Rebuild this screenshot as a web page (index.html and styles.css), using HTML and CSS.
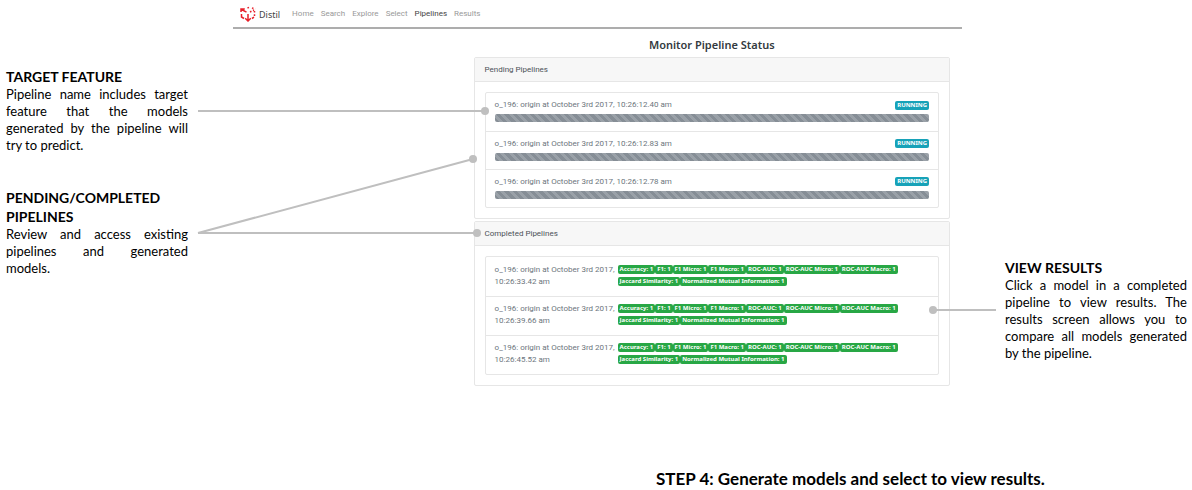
FILE: index.html
```html
<!DOCTYPE html>
<html lang="en">
<head>
<meta charset="utf-8">
<title>Distil - Monitor Pipeline Status</title>
<link rel="stylesheet" href="styles.css">
</head>
<body>
<div class="sheet">
  <aside class="notes notes-left">
    <section class="note note-target">
      <h2>TARGET FEATURE</h2>
      <p>Pipeline name includes target feature that the models generated by the pipeline will try to predict.</p>
    </section>
    <section class="note">
      <h2>PENDING/COMPLETED PIPELINES</h2>
      <p>Review and access existing pipelines and generated models.</p>
    </section>
  </aside>

  <div class="app">
    <header class="navbar">
      <a class="brand" href="#">
        <svg class="logo" viewBox="0 0 16 16" aria-hidden="true">
          <g fill="none" stroke="#e8202a" stroke-width="1.5">
            <path d="M1 6V3H4.800M1.500 3.500L6.500 6.200"/>
            <path d="M8 8V14.500M5.200 12.300L8 15L10.800 12.300"/>
            <path d="M1.500 8V11L4 12.500M14 11.200L12 12.500"/>
            <path stroke-dasharray="1.600 1.700" d="M7.500 2L10.500 .8M10 6L14 4M12 1.800L15 3.300M14.500 5V11"/>
          </g>
        </svg>
        <span>Distil</span>
      </a>
      <nav class="links">
        <a href="#">Home</a>
        <a href="#">Search</a>
        <a href="#">Explore</a>
        <a href="#">Select</a>
        <a class="active" href="#" aria-current="page">Pipelines</a>
        <a href="#">Results</a>
      </nav>
    </header>

    <main class="content">
      <h1>Monitor Pipeline Status</h1>
      <section class="card">
        <h3>Pending Pipelines</h3>
        <ul class="list pending">
          <li><div class="row"><span>o_196: origin at October 3rd 2017, 10:26:12.40 am</span><span class="badge info">RUNNING</span></div><div class="bar"></div></li>
          <li><div class="row"><span>o_196: origin at October 3rd 2017, 10:26:12.83 am</span><span class="badge info">RUNNING</span></div><div class="bar"></div></li>
          <li><div class="row"><span>o_196: origin at October 3rd 2017, 10:26:12.78 am</span><span class="badge info">RUNNING</span></div><div class="bar"></div></li>
        </ul>
      </section>
      <section class="card">
        <h3>Completed Pipelines</h3>
        <ul class="list completed">
          <li>
            <span class="name">o_196: origin at October 3rd 2017, 10:26:33.42 am</span>
            <div class="scores"><span class="badge">Accuracy: 1</span><span class="badge">F1: 1</span><span class="badge">F1 Micro: 1</span><span class="badge">F1 Macro: 1</span><span class="badge">ROC-AUC: 1</span><span class="badge">ROC-AUC Micro: 1</span><span class="badge">ROC-AUC Macro: 1</span><span class="badge">Jaccard Similarity: 1</span><span class="badge">Normalized Mutual Information: 1</span></div>
          </li>
          <li>
            <span class="name">o_196: origin at October 3rd 2017, 10:26:39.66 am</span>
            <div class="scores"><span class="badge">Accuracy: 1</span><span class="badge">F1: 1</span><span class="badge">F1 Micro: 1</span><span class="badge">F1 Macro: 1</span><span class="badge">ROC-AUC: 1</span><span class="badge">ROC-AUC Micro: 1</span><span class="badge">ROC-AUC Macro: 1</span><span class="badge">Jaccard Similarity: 1</span><span class="badge">Normalized Mutual Information: 1</span></div>
          </li>
          <li>
            <span class="name">o_196: origin at October 3rd 2017, 10:26:45.52 am</span>
            <div class="scores"><span class="badge">Accuracy: 1</span><span class="badge">F1: 1</span><span class="badge">F1 Micro: 1</span><span class="badge">F1 Macro: 1</span><span class="badge">ROC-AUC: 1</span><span class="badge">ROC-AUC Micro: 1</span><span class="badge">ROC-AUC Macro: 1</span><span class="badge">Jaccard Similarity: 1</span><span class="badge">Normalized Mutual Information: 1</span></div>
          </li>
        </ul>
      </section>
    </main>
  </div>

  <aside class="notes notes-right">
    <section class="note">
      <h2>VIEW RESULTS</h2>
      <p>Click a model in a completed pipeline to view results. The results screen allows you to compare all models generated by the pipeline.</p>
    </section>
  </aside>

  <svg class="connectors" viewBox="0 0 1192 490" aria-hidden="true">
    <g stroke="#bfbfbf" stroke-width="2">
      <path d="M198 111H485M198 233L473 159M198 233H477M933 310H996"/>
    </g>
    <g fill="#bfbfbf">
      <circle cx="485" cy="111" r="4"/>
      <circle cx="473" cy="159" r="4"/>
      <circle cx="477" cy="233" r="4"/>
      <circle cx="933" cy="310" r="4"/>
    </g>
  </svg>
</div>
<p class="step">STEP 4: Generate models and select to view results.</p>
</body>
</html>
```
FILE: styles.css
```css
* { box-sizing: border-box; }
body, h1, h2, h3, p, ul { margin: 0; padding: 0; }
body { background: #fff; color: #000; font-family: Lato, sans-serif; }
ul { list-style: none; }
a { color: inherit; text-decoration: none; }

.sheet {
  position: relative;
  display: grid;
  grid-template-columns: 184px 1fr 182px;
  column-gap: 43px;
  padding: 0 5px 0 6px;
}
.connectors { position: absolute; top: 0; left: 0; width: 100%; pointer-events: none; }

.notes-left { padding: 67px 2px 0 0; }
.notes-right { padding-top: 258px; }
.note-target { margin-bottom: 34px; }
.note h2 { font-size: 14px; line-height: 19px; font-weight: 700; }
.note p { font-size: 13px; line-height: 17px; text-align: justify; }

.app { font-family: Roboto, sans-serif; color: #6c757d; font-size: 8px; line-height: 10px; }
.navbar {
  display: flex;
  align-items: center;
  height: 29px;
  padding: 1px 7px 0;
  gap: 12px;
  border-bottom: 2px solid #adadad;
}
.brand { display: flex; align-items: center; gap: 3px; font: 9px "Noto Sans", sans-serif; color: #444; }
.logo { width: 16px; height: 16px; }
.links { display: flex; gap: 7px; color: #999; }
.links .active { color: #444; }

.content { margin: 8px 12px 0 33%; }
h1 { font: 600 11px/15px "Noto Sans", sans-serif; text-align: center; color: #333a40; margin-bottom: 5px; }
.card { border: 1px solid #e6e6e6; border-radius: 2px; margin-bottom: 2px; }
.card h3 {
  font-size: 8px;
  line-height: 23px;
  font-weight: 400;
  color: #4c5258;
  padding: 0 10px;
  background: #f7f7f7;
  border-bottom: 1px solid #e6e6e6;
}
.list { display: grid; grid-auto-rows: 1fr; margin: 10px; border: 1px solid #e6e6e6; border-radius: 2px; }
.list li { padding: 0 9px; }
.list li + li { border-top: 1px solid #e6e6e6; }
.pending { min-height: 116px; }
.list.pending li { display: flex; flex-direction: column; justify-content: center; gap: 4px; padding-bottom: 2px; }
.row { display: flex; justify-content: space-between; align-items: center; }
.bar {
  height: 8px;
  border-radius: 2px;
  background: repeating-linear-gradient(45deg, #868e96 0 3px, #9aa1a8 3px 6px);
}
.completed { min-height: 119px; }
.list.completed li { display: grid; grid-template-columns: 123px 1fr; align-content: center; line-height: 12px; padding-bottom: 2px; }
.scores { display: flex; flex-wrap: wrap; gap: 3px 0; padding: 1px 20px 2px 0; }
.badge {
  font: 700 6px/9px "Noto Sans", sans-serif;
  color: #fff;
  background: #28a745;
  border-radius: 2px;
  padding: 0 2px;
  white-space: nowrap;
}
.info { background: #17a2b8; }

.step { font-size: 17px; line-height: 22px; font-weight: 700; padding: 80px 0 0 656px; }
```
